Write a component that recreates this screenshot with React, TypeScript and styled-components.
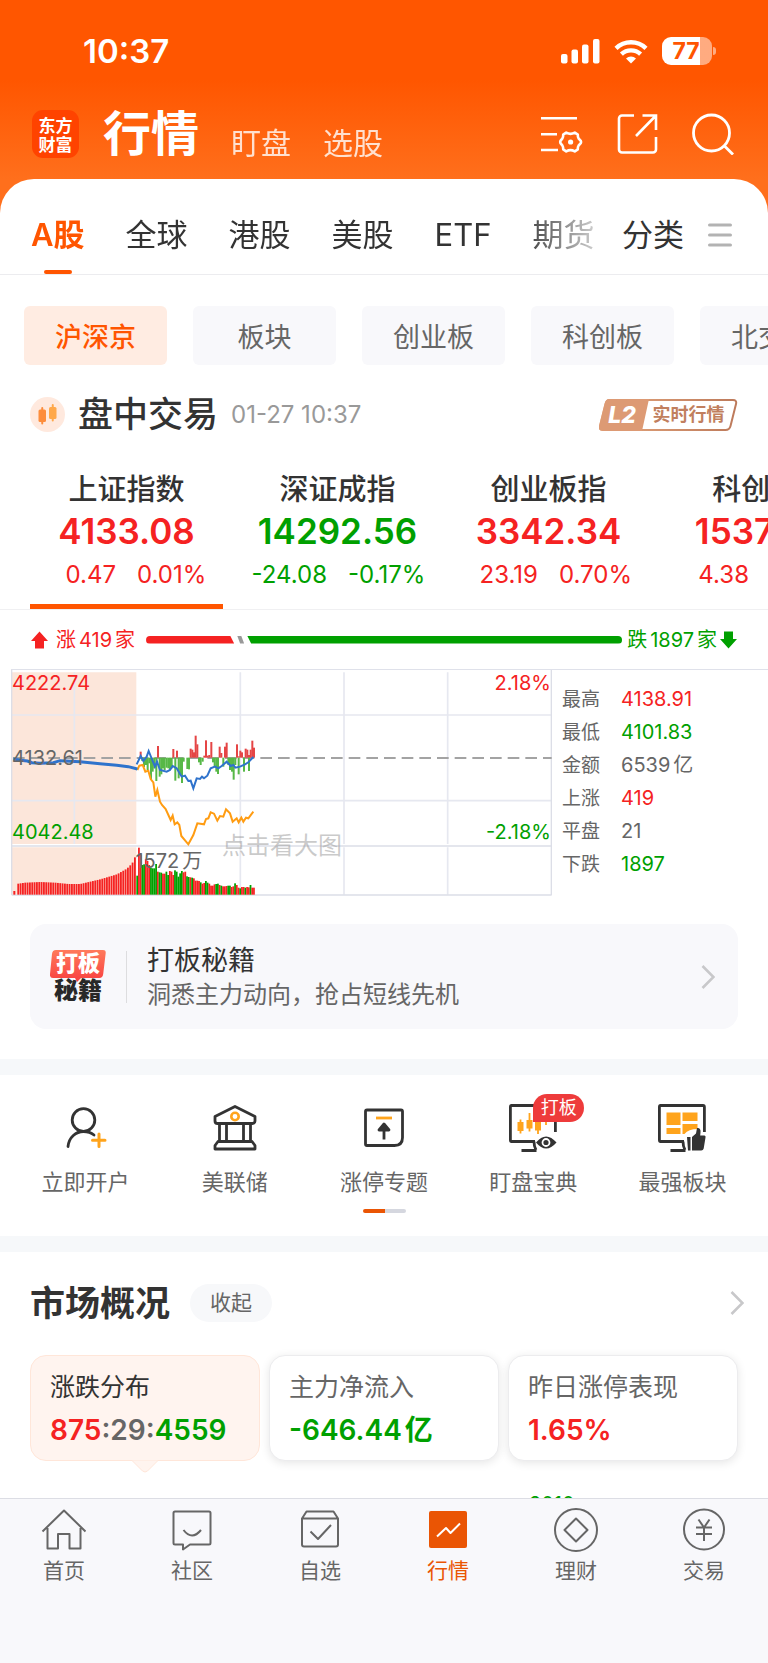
import React from "react";
import styled, { createGlobalStyle } from "styled-components";

const RED = "#f52222";
const GREEN = "#00a000";
const ORANGE = "#ff5500";
const INK = "#333333";
const GREY = "#666666";
const toneColor = { up: RED, down: GREEN, flat: GREY };
type Tone = keyof typeof toneColor;

const GlobalStyle = createGlobalStyle`
  *, *::before, *::after { box-sizing: border-box; }
  body {
    margin: 0;
    background: #ffffff;
    color: ${INK};
    font-family: Inter, "Noto Sans CJK SC", sans-serif;
  }
  button {
    margin: 0;
    padding: 0;
    border: 0;
    background: none;
    color: inherit;
    font: inherit;
    cursor: pointer;
  }
  a { color: inherit; text-decoration: none; }
  h1, h2, p, dl, dd, dt { margin: 0; font-weight: inherit; }
  svg { display: block; flex: none; }
`;

const Shell = styled.div`
  display: flex;
  flex-direction: column;
  height: 100vh;
  overflow: hidden;
`;

const Content = styled.main`
  flex: 1;
  min-height: 0;
  overflow: hidden;
  background: linear-gradient(#ff5600 0, #ff5600 80px, #ff6f1c 179px, #ff6f1c 260px, #ffffff 260px);
`;

/* Number set between Chinese characters, or before a Chinese unit. */
const Amount = styled.span<{ $between?: boolean }>`
  margin: 0 3px 0 ${(p) => (p.$between ? 3 : 0)}px;
`;

/* ---------- header ---------- */

const StatusBar = styled.div`
  display: flex;
  align-items: center;
  justify-content: space-between;
  height: 102px;
  padding: 0 56px 0 83px;
  color: #ffffff;
`;

const Clock = styled.time`
  font-size: 33px;
  line-height: 40px;
  font-weight: 600;
`;

const StatusIcons = styled.div`
  display: flex;
  align-items: center;
  gap: 14px;
`;

const Battery = styled.div`
  position: relative;
  width: 50px;
  height: 28px;
  border-radius: 9px;
  background: linear-gradient(to right, #ffffff 76%, rgba(255, 255, 255, 0.5) 76%);
  color: ${ORANGE};
  font-size: 23px;
  line-height: 28px;
  font-weight: 700;
  text-align: center;
  padding-right: 2px;

  &::after {
    content: "";
    position: absolute;
    right: -4px;
    top: 10px;
    width: 3px;
    height: 8px;
    border-radius: 0 4px 4px 0;
    background: rgba(255, 255, 255, 0.5);
  }
`;

const TitleBar = styled.header`
  display: flex;
  align-items: center;
  height: 77px;
  padding: 0 34px 13px 32px;
  color: #ffffff;
`;

const Logo = styled.span`
  width: 47px;
  height: 48px;
  padding: 5px 0;
  border-radius: 11px;
  background: #ff4300;
  font-family: "Noto Sans CJK SC", sans-serif;
  font-size: 17px;
  line-height: 19px;
  font-weight: 700;
  text-align: center;
`;

const TitleLinks = styled.nav`
  flex: 1;
  display: flex;
  align-items: flex-end;
  gap: 32px;
  margin-left: 24px;
`;

const MainTitle = styled.h1`
  font-size: 48px;
  line-height: 48px;
  font-weight: 700;
`;

const SubTitle = styled.a`
  font-size: 30px;
  line-height: 30px;
  opacity: 0.8;
`;

const Actions = styled.div`
  display: flex;
  align-items: center;
  gap: 34px;
`;

/* ---------- sheet and tabs ---------- */

const Sheet = styled.div`
  background: #ffffff;
  border-radius: 34px 34px 0 0;
`;

const TabBar = styled.div`
  display: flex;
  align-items: stretch;
  height: 96px;
  padding: 16px 36px 0 31px;
  border-bottom: 1px solid #ececef;
`;

const TabList = styled.div`
  flex: 1;
  min-width: 0;
  display: flex;
  gap: 41px;
  overflow: hidden;
  mask-image: linear-gradient(to right, #000 calc(100% - 74px), rgba(0, 0, 0, 0.25));
`;

const Tab = styled.button<{ $active?: boolean }>`
  position: relative;
  flex: none;
  font-size: 31px;
  line-height: 80px;
  font-weight: ${(p) => (p.$active ? 600 : 400)};
  color: ${(p) => (p.$active ? ORANGE : INK)};

  &::after {
    content: "";
    display: ${(p) => (p.$active ? "block" : "none")};
    position: absolute;
    left: calc(50% - 14px);
    bottom: 0;
    width: 28px;
    height: 4px;
    border-radius: 2px;
    background: ${ORANGE};
  }
`;

const TabTools = styled.div`
  display: flex;
  align-items: center;
  gap: 24px;
  margin-left: 28px;
`;

const ChipRow = styled.div`
  display: flex;
  gap: 26px;
  padding: 31px 0 0 24px;
  overflow: hidden;
`;

const Chip = styled.button<{ $active?: boolean }>`
  flex: none;
  width: 143px;
  height: 59px;
  border-radius: 6px;
  background: ${(p) => (p.$active ? "#ffece2" : "#f8f8fb")};
  color: ${(p) => (p.$active ? ORANGE : GREY)};
  font-size: 27px;
  font-weight: ${(p) => (p.$active ? 500 : 400)};
`;

const SessionRow = styled.div`
  display: flex;
  align-items: center;
  height: 35px;
  margin: 32px 30px 0;
`;

const SessionTitle = styled.h2`
  margin-left: 13px;
  font-size: 35px;
  line-height: 35px;
  font-weight: 500;
`;

const SessionTime = styled.time`
  flex: 1;
  margin-left: 13px;
  font-size: 24px;
  line-height: 35px;
  color: #999999;
`;

const LevelBadge = styled.button`
  position: relative;
  display: flex;
  align-items: center;
  width: 139px;
  height: 32px;
  padding-right: 6px;
  color: #c17f5e;
  font-size: 18px;
  line-height: 32px;
  font-weight: 700;

  svg { position: absolute; inset: 0; }
  span { position: relative; flex: 1; text-align: center; }
`;

const LevelMark = styled.em`
  position: relative;
  width: 46px;
  color: #ffffff;
  font-size: 23px;
  font-weight: 800;
`;

/* ---------- indices ---------- */

const IndexRow = styled.div`
  display: flex;
  gap: 18px;
  padding: 41px 0 0 30px;
  overflow: hidden;
  border-bottom: 1px solid #f0f0f2;
`;

const IndexCard = styled.button<{ $active?: boolean }>`
  flex: none;
  width: 193px;
  padding-bottom: 9px;
  border-bottom: 5px solid ${(p) => (p.$active ? ORANGE : "transparent")};
`;

const IndexName = styled.div`
  font-size: 29px;
  line-height: 34px;
  font-weight: 500;
`;

const IndexValue = styled.div<{ $tone: Tone }>`
  font-size: 35px;
  line-height: 48px;
  font-weight: 600;
  color: ${(p) => toneColor[p.$tone]};
`;

const IndexChange = styled.div<{ $tone: Tone }>`
  display: grid;
  grid-template-columns: 1fr 1fr;
  gap: 21px;
  font-size: 24px;
  line-height: 40px;
  color: ${(p) => toneColor[p.$tone]};

  span:first-child { justify-self: end; }
  span:last-child { justify-self: start; }
`;

const BreadthRow = styled.div`
  display: flex;
  align-items: center;
  height: 59px;
  padding: 0 31px;
`;

const BreadthLabel = styled.span<{ $tone: Tone }>`
  display: flex;
  align-items: center;
  gap: ${(p) => (p.$tone === "up" ? 8 : 3)}px;
  font-size: 20px;
  line-height: 30px;
  color: ${(p) => toneColor[p.$tone]};
`;

const BreadthBar = styled.div`
  flex: 1;
  display: flex;
  gap: 3px;
  height: 8px;
  margin: 0 5px 0 11px;
`;

const RiseBar = styled.span`
  flex: 88;
  border-radius: 4px 0 0 4px;
  background: ${RED};
  clip-path: polygon(0 0, calc(100% - 4px) 0, 100% 100%, 0 100%);
`;

const FlatBar = styled.span`
  width: 7px;
  background: #999999;
  clip-path: polygon(0 0, 4px 0, 100% 100%, 3px 100%);
`;

const FallBar = styled.span`
  flex: 375;
  border-radius: 0 4px 4px 0;
  background: ${GREEN};
  clip-path: polygon(0 0, 100% 0, 100% 100%, 4px 100%);
`;

/* ---------- chart ---------- */

const ChartPanel = styled.section`
  display: flex;
  margin-left: 11px;
  border-top: 1px solid #dfe1ea;
`;

const ChartBox = styled.button`
  position: relative;
  flex: 1;
  height: 226px;

  svg { width: 100%; height: 100%; }
`;

const ChartLabel = styled.span<{ $color: string; $top: number; $right?: boolean }>`
  position: absolute;
  top: ${(p) => p.$top}px;
  ${(p) => (p.$right ? "right: 1px;" : "left: 1px;")}
  font-size: 20px;
  line-height: 24px;
  color: ${(p) => p.$color};
`;

const VolumeLabel = styled.span`
  position: absolute;
  left: 23%;
  top: 178px;
  font-size: 20px;
  line-height: 26px;
  color: ${GREY};
`;

const ChartHint = styled.span`
  position: absolute;
  left: 39%;
  top: 161px;
  font-size: 24px;
  line-height: 30px;
  color: rgba(150, 150, 150, 0.5);
`;

const Stats = styled.dl`
  display: grid;
  grid-template-columns: 59px 1fr;
  grid-auto-rows: 33px;
  align-content: start;
  width: 216px;
  padding: 13px 0 0 10px;
  font-size: 19px;
  line-height: 33px;
  color: ${GREY};
`;

const StatValue = styled.dd<{ $tone: Tone }>`
  font-size: 20px;
  color: ${(p) => toneColor[p.$tone]};
`;

/* ---------- promo ---------- */

const Promo = styled.a`
  display: flex;
  align-items: center;
  height: 105px;
  margin: 28px 30px 30px;
  padding: 0 23px 0 20px;
  border-radius: 16px;
  background: #f8f8fb;
`;

const PromoLogo = styled.span`
  position: relative;
  display: flex;
  flex-direction: column;
  width: 56px;
  height: 54px;
  font-size: 24px;
  line-height: 27px;
  font-weight: 900;
  text-align: center;
  color: #282828;

  svg { position: absolute; left: 0; top: 0; }
  b { position: relative; font-size: 22px; font-weight: 900; color: #ffffff; }
`;

const PromoText = styled.span`
  flex: 1;
  display: flex;
  flex-direction: column;
  margin-left: 20px;
  padding-left: 21px;
  background: linear-gradient(#dddddf, #dddddf) left center / 1px 52px no-repeat;
`;

const PromoTitle = styled.strong`
  font-size: 27px;
  line-height: 36px;
  font-weight: 400;
`;

const PromoNote = styled.span`
  font-size: 24px;
  line-height: 32px;
  color: ${GREY};
`;

const Band = styled.div`
  height: 16px;
  background: #f6f8fa;
`;

/* ---------- quick entries ---------- */

const QuickSection = styled.section`
  padding: 29px 11px 23px;
`;

const QuickGrid = styled.div`
  display: grid;
  grid-template-columns: repeat(5, 1fr);
`;

const QuickItem = styled.a`
  display: flex;
  flex-direction: column;
  align-items: center;
  gap: 15px;
  font-size: 22px;
  line-height: 30px;
  color: ${GREY};
`;

const QuickIcon = styled.span`
  position: relative;
`;

const QuickTag = styled.span`
  position: absolute;
  left: 24px;
  top: -10px;
  width: 51px;
  height: 28px;
  border-radius: 14px 14px 14px 0;
  background: #ee3b3b;
  color: #ffffff;
  font-size: 18px;
  line-height: 28px;
  text-align: center;
`;

const Pager = styled.div`
  width: 43px;
  height: 4px;
  margin: 12px auto 0;
  border-radius: 2px;
  background: linear-gradient(to right, #ea5504 50%, #d5d7df 50%);
`;

/* ---------- market overview ---------- */

const OverviewHead = styled.div`
  display: flex;
  align-items: center;
  height: 38px;
  margin: 32px 24px 33px 30px;
`;

const OverviewTitle = styled.h2`
  font-size: 35px;
  line-height: 38px;
  font-weight: 600;
`;

const FoldButton = styled.button`
  width: 82px;
  height: 38px;
  margin: 0 auto 0 20px;
  border-radius: 19px;
  background: #f7f8fa;
  color: ${GREY};
  font-size: 21px;
  line-height: 38px;
`;

const OverviewGrid = styled.div`
  display: grid;
  grid-template-columns: repeat(3, 1fr);
  gap: 9px;
  margin: 0 30px;
`;

const OverviewCard = styled.button<{ $active?: boolean }>`
  position: relative;
  height: 106px;
  padding: 3px 19px 0;
  border: 1px solid ${(p) => (p.$active ? "#ffe6d9" : "#ececee")};
  border-radius: 16px;
  background: ${(p) => (p.$active ? "#fff4ef" : "#ffffff")};
  box-shadow: ${(p) => (p.$active ? "none" : "0 2px 10px rgba(0, 0, 0, 0.1)")};
  color: ${(p) => (p.$active ? INK : GREY)};
  text-align: left;

  svg {
    position: absolute;
    left: calc(50% - 13px);
    top: 103px;
  }
`;

const CardTitle = styled.div`
  font-size: 25px;
  line-height: 40px;
`;

const CardValue = styled.div<{ $tone: Tone }>`
  font-size: 28px;
  line-height: 46px;
  font-weight: 600;
  color: ${(p) => toneColor[p.$tone]};
`;

const Toned = styled.span<{ $tone: Tone }>`
  color: ${(p) => toneColor[p.$tone]};
`;

const BarCount = styled.span`
  grid-column: 3;
  margin-top: 19px;
  padding-left: 21px;
  font-size: 20px;
  line-height: 30px;
  color: ${GREEN};
`;

/* ---------- bottom navigation ---------- */

const BottomNav = styled.nav`
  flex: none;
  display: grid;
  grid-template-columns: repeat(6, 1fr);
  align-items: start;
  height: 165px;
  padding-top: 8px;
  border-top: 1px solid #dcdde4;
  background: #f8f8fb;
`;

const NavItem = styled.a<{ $active?: boolean }>`
  display: flex;
  flex-direction: column;
  align-items: center;
  gap: 3px;
  font-size: 21px;
  line-height: 30px;
  color: ${(p) => (p.$active ? "#ea5504" : GREY)};
`;

/* ---------- drawings ---------- */

const SignalIcon = () => (
  <svg width="39" height="25" viewBox="0 0 39 25" fill="#fff" aria-hidden="true">
    <rect x="0" y="15" width="6.500" height="9.500" rx="2" />
    <rect x="10.500" y="10.500" width="6.500" height="14" rx="2" />
    <rect x="21" y="5.500" width="6.500" height="19" rx="2" />
    <rect x="32" y="0" width="6.500" height="24.500" rx="2" />
  </svg>
);

const WifiIcon = () => (
  <svg width="34" height="25" viewBox="0 0 34 25" fill="none" stroke="#fff" strokeWidth="4.400" aria-hidden="true">
    <path d="M2 9.300a21.500 21.500 0 0 1 30 0" />
    <path d="M7.400 15.200a14 14 0 0 1 19.200 0" />
    <path d="M17 24.500l-5-5a7.400 7.400 0 0 1 10 0z" fill="#fff" stroke="none" />
  </svg>
);

const FilterIcon = () => (
  <svg width="42" height="42" viewBox="0 0 42 42" fill="none" stroke="#fff" strokeWidth="2.600" aria-hidden="true">
    <path d="M0 5.300h36M0 21.200h16M0 37h17" />
    <path
      d="M25.200 19.600c1.800 1 2.600 1.300 4.300 1.300s2.500-.3 4.300-1.300l3 2c-.2 2.400.2 2.900 1 4.200.7 1.100 2.300 1.500 2.300 3.200s-1.600 2.100-2.300 3.200c-.8 1.300-1.200 1.800-1 4.200l-3 2c-1.800-1-2.600-1.300-4.300-1.300s-2.500.3-4.300 1.300l-3-2c.2-2.400-.2-2.900-1-4.200-.7-1.100-2-1.500-2-3.200s1.300-2.100 2-3.200c.8-1.300 1.200-1.800 1-4.200z"
      strokeLinejoin="round"
    />
    <circle cx="29.600" cy="29" r="2.600" fill="#fff" stroke="none" />
  </svg>
);

const ShareIcon = () => (
  <svg width="41" height="42" viewBox="0 0 41 42" fill="none" stroke="#fff" strokeWidth="2.600" aria-hidden="true">
    <path d="M17 2.500H5a3 3 0 0 0-3 3v31a3 3 0 0 0 3 3h31a3 3 0 0 0 3-3V24" />
    <path d="M25.500 2.500H39V17M38.500 3L19 23" />
  </svg>
);

const SearchIcon = () => (
  <svg width="42" height="42" viewBox="0 0 42 42" fill="none" stroke="#fff" strokeWidth="2.800" aria-hidden="true">
    <circle cx="19.500" cy="20" r="18" />
    <path d="M32 32.500l9 9" />
  </svg>
);

const MenuIcon = () => (
  <svg width="24" height="24" viewBox="0 0 24 24" stroke="#b3b3b3" strokeWidth="3" strokeLinecap="round" aria-hidden="true">
    <path d="M1.500 2h21M1.500 12h21M1.500 22h21" />
  </svg>
);

const CandleIcon = () => (
  <svg width="35" height="35" viewBox="0 0 35 35" aria-hidden="true">
    <circle cx="17.500" cy="17.500" r="17.500" fill="#ffe9de" />
    <g fill="#fd8d3c">
      <rect x="8.500" y="12.500" width="7.500" height="12.500" rx="1.500" />
      <rect x="11.250" y="10" width="2" height="17.500" rx="1" />
    </g>
    <g fill="#ffa84a">
      <rect x="19" y="10" width="7.500" height="12" rx="1.500" />
      <rect x="21.750" y="7" width="2" height="17.500" rx="1" />
    </g>
  </svg>
);

const BadgeFrame = () => (
  <svg width="139" height="32" viewBox="0 0 139 32" fill="none" aria-hidden="true">
    <defs>
      <linearGradient id="badgeTone" x1="0" x2="1">
        <stop offset="0" stopColor="#e5a77d" />
        <stop offset="1" stopColor="#bd7a5b" />
      </linearGradient>
    </defs>
    <path d="M10.500 1H134q4 0 3 4l-5.500 22q-1 4-5 4H4q-4 0-3-4L6.500 5q1-4 4-4z" stroke="url(#badgeTone)" strokeWidth="2" />
    <path d="M10 0h40l-7 32H4q-5 0-4-5L5.500 5q1-5 4.500-5z" fill="#dd9a74" />
  </svg>
);

const ArrowUp = () => (
  <svg width="17" height="18" viewBox="0 0 17 18" fill={RED} aria-hidden="true">
    <path d="M8.500 0.500L17 10h-4v7.500H4V10H0z" />
  </svg>
);

const ArrowDown = () => (
  <svg width="17" height="18" viewBox="0 0 17 18" fill={GREEN} aria-hidden="true">
    <path d="M8.500 17.500L0 8h4V0.500h9V8h4z" />
  </svg>
);

const Chevron = () => (
  <svg width="14" height="24" viewBox="0 0 14 24" fill="none" stroke="#c8c8ca" strokeWidth="2.600" aria-hidden="true">
    <path d="M1.500 1l11 11-11 11" />
  </svg>
);

const PromoBubble = () => (
  <svg width="56" height="32" viewBox="0 0 56 32" aria-hidden="true">
    <defs>
      <linearGradient id="bubbleTone" x1="0" x2="0" y1="0" y2="1">
        <stop offset="0" stopColor="#ff7a5c" />
        <stop offset="1" stopColor="#f8403f" />
      </linearGradient>
    </defs>
    <path d="M6 0h47q3 0 2.700 3l-2.500 21q-.4 4-4 4H31l-4 4-2-4H3q-3.500 0-3-4L2 4q.4-4 4-4z" fill="url(#bubbleTone)" />
  </svg>
);

const quickStroke = { fill: "none", stroke: INK, strokeWidth: 2.8, strokeLinejoin: "round" as const };

const AccountIcon = () => (
  <svg width="48" height="48" viewBox="0 0 48 48" {...quickStroke} strokeLinecap="round" aria-hidden="true">
    <circle cx="21.500" cy="16" r="11.300" />
    <path d="M6 42.500c1-9.500 8-15 15.500-15 4 0 7.500 1 10.500 3.500" />
    <path d="M37 30v12.500M30.500 36.200h12.500" stroke="#ffa41c" strokeWidth="3" />
  </svg>
);

const BankIcon = () => (
  <svg width="48" height="48" viewBox="0 0 48 48" {...quickStroke} aria-hidden="true">
    <path d="M24 2.500L4 12.500v4.500q0 2.500 2.500 2.500h35q2.500 0 2.500-2.500v-4.500z" />
    <path d="M8.500 19.500v18M15.500 19.500v18M32.500 19.500v18M39.500 19.500v18" />
    <path d="M7 37.500h34l3 4V45H4v-3.500z" />
    <circle cx="24" cy="12.500" r="3.700" stroke="#ffa41c" strokeWidth="2.600" />
  </svg>
);

const LimitIcon = () => (
  <svg width="48" height="48" viewBox="0 0 48 48" {...quickStroke} aria-hidden="true">
    <path d="M7 6h34q1.500 0 1.500 1.500v26q0 8-8 8H7q-1.500 0-1.500-1.500V7.500q0-1.500 1.500-1.500z" />
    <path d="M16 14h16" stroke="#ffa41c" />
    <path d="M24 20v15.500M19 26l5-6 5 6z" fill={INK} />
  </svg>
);

const ScreenFrame = () => (
  <path d="M26 37.500H2.500Q1.400 37.500 1.400 36V3Q1.400 1.500 2.500 1.500h42.500Q46.400 1.500 46.400 3V28M25 37.500q0 5 2 8.500M12.500 46.500H27.500" strokeWidth="2.800" />
);

const WatchIcon = () => (
  <svg width="48" height="48" viewBox="0 0 48 48" {...quickStroke} aria-hidden="true">
    <ScreenFrame />
    <path d="M11.500 15.500v14M20.500 9v18.500M29 13v17M37 8v13" stroke="#ffa41c" strokeWidth="1.800" />
    <path d="M8.500 18h6v9h-6zM17.500 16h6v8.500h-6zM26 18h6v8.500h-6z" fill="#ffa41c" stroke="none" />
    <path d="M27 38.500q10-12 20.500 0-10.500 12-20.500 0z" fill={INK} stroke="none" />
    <circle cx="37" cy="38.500" r="3.500" stroke="#fff" strokeWidth="1.800" />
  </svg>
);

const SectorIcon = () => (
  <svg width="48" height="48" viewBox="0 0 48 48" {...quickStroke} aria-hidden="true">
    <ScreenFrame />
    <path d="M8.500 8.500h14v12.500h-14zM24.500 8.500H39.500v8.500H24.500zM8.500 24h14v6h-14zM24.500 20H39.500v5q-9 0-13 5h-2z" fill="#ffa41c" stroke="none" />
    <path
      d="M29 33h3.500v13.500H30zM34 33l4-3.500 1-5.500q4-.5 3.500 4.500l-.3 3H46.500q1.500.5 1 2l-1.800 11q-.5 2-2.500 2H34z"
      fill={INK}
      stroke="none"
    />
  </svg>
);

const navStroke = { width: 46, height: 46, viewBox: "0 0 46 46", fill: "none", stroke: "currentColor", strokeWidth: 2, strokeLinejoin: "round" as const };

const HomeIcon = () => (
  <svg {...navStroke} aria-hidden="true">
    <path d="M1.500 24.500L23 3.500l21.500 21M6.500 21v20.500H17V27h11.500v14.500h11V21" />
  </svg>
);
const CommunityIcon = () => (
  <svg {...navStroke} aria-hidden="true">
    <path d="M6 4.500h34q1.500 0 1.500 1.500v30q0 1.500-1.500 1.500H21l-7 5v-5H6q-1.500 0-1.500-1.500V6q0-1.500 1.500-1.500z" />
    <path d="M14.500 23q8.500 11 17.500 0" />
  </svg>
);
const WatchlistIcon = () => (
  <svg {...navStroke} aria-hidden="true">
    <path d="M5 11.500L9.500 4.500h27L41 11.500v26q0 2-2 2H7q-2 0-2-2zM5 11.500h36" />
    <path d="M13.500 24.500l7.500 7.500 13-14" />
  </svg>
);
const MarketIcon = () => (
  <svg {...navStroke} aria-hidden="true">
    <rect x="4" y="4" width="38" height="37" rx="2" fill="currentColor" stroke="none" />
    <path d="M12 29.500l9-8.500 4.500 5 9.500-9.500" stroke="#fff" strokeWidth="2" />
  </svg>
);
const WealthIcon = () => (
  <svg {...navStroke} aria-hidden="true">
    <circle cx="23" cy="23" r="21" />
    <path d="M23 11.500L34.500 23 23 34.500 11.500 23z" />
  </svg>
);
const TradeIcon = () => (
  <svg {...navStroke} aria-hidden="true">
    <circle cx="23" cy="22.500" r="20" />
    <path d="M17.500 12.500l5.500 8 5.500-8M23 20.500V34M15 20.500h16M15 27h16" />
  </svg>
);

/* Chart drawing units: three per displayed pixel. */
const auctionCurve: [number, number][] = [
  [54, 33], [75, 36], [120, 38], [165, 36], [205, 32], [240, 32], [300, 46], [350, 61], [380, 78], [396, 94], [404, 112],
];
const auctionHeight = (x: number) => {
  const i = Math.max(1, auctionCurve.findIndex(([cx]) => cx >= x));
  const [x0, y0] = auctionCurve[i - 1];
  const [x1, y1] = auctionCurve[i];
  return y0 + ((y1 - y0) * (x - x0)) / (x1 - x0);
};
const auctionBars = Array.from({ length: 51 }, (_, i) => 54 + i * 7);

const volumeTops = [
  662, 578, 598, 630, 628, 612, 618, 630, 638, 640, 640, 627, 650, 652, 653, 656, 656, 650, 660, 648, 650, 660, 646,
  650, 665, 655, 648, 652, 650, 664, 666, 667, 668, 670, 677, 677, 678, 682, 686, 684, 678, 683, 686, 692, 692, 688,
  687, 686, 690, 692, 694, 694, 693, 692, 692, 696, 694, 685, 690, 698, 700, 696, 696, 698, 696, 697, 690, 698, 698,
];
const volumeSides = "GRRGGRRRGGGGRGGRRGGRRRGGGGGRRGGRGRRRRGRRGGRRRRGGRGRRRGGRRGRRGRRGRRGRR";

const strengthUp = [
  [422, 290], [474, 273], [520, 282], [531, 287], [572, 281], [577, 284], [582, 292], [587, 242], [592, 268],
  [613, 302], [618, 256], [623, 302], [628, 300], [634, 261], [659, 275], [664, 294], [675, 275], [680, 263],
  [711, 268], [716, 304], [721, 287], [726, 292], [737, 281], [742, 284], [747, 300], [752, 284], [757, 257], [762, 278],
];
const strengthDown = [
  [427, 318], [432, 336], [438, 330], [443, 345], [448, 325], [453, 372], [458, 350], [463, 340], [469, 378],
  [479, 365], [484, 358], [489, 340], [494, 345], [500, 338], [505, 340], [510, 345], [515, 340], [526, 377],
  [536, 370], [541, 360], [546, 384], [551, 320], [562, 342], [567, 343], [597, 322], [602, 330], [608, 320],
  [639, 322], [644, 335], [649, 350], [654, 357], [670, 335], [685, 330], [690, 345], [696, 350], [701, 374],
  [706, 330], [716, 358], [732, 350], [747, 348],
];

const IntradayChart = () => (
  <svg viewBox="33 45 1623 678" preserveAspectRatio="none" aria-hidden="true">
    <path d="M35 52H409V567H35zM35 577H409V719H35z" fill="#fce6da" />
    <g stroke="#e6e8f0" strokeWidth="5" fill="none">
      <path d="M35 180H1655M35 437H1655M223 52V567M721 52V567M1032 52V567M1343 52V567M721 577V719M1032 577V719M1343 577V719" />
    </g>
    <path d="M35 573H1655M35 720H1655M35 45V720M1654 45V720" stroke="#dcdee7" strokeWidth="4" />
    <path d="M39 309H1655" stroke="#a3a3a3" strokeWidth="6" strokeDasharray="35 18" />
    {strengthUp.map(([x, y]) => (
      <rect key={x} x={x - 3} y={y} width="6" height={308 - y} fill="#e54545" />
    ))}
    {strengthDown.map(([x, y]) => (
      <rect key={x} x={x - 3} y="308" width="6" height={y - 308} fill="#57b847" />
    ))}
    <rect x="40" y="708" width="6" height="11" fill={RED} />
    {auctionBars.map((x) => (
      <rect key={x} x={x - 2} y={719 - auctionHeight(x)} width="5.500" height={auctionHeight(x)} fill={RED} />
    ))}
    {volumeTops.map((top, i) => (
      <rect key={i} x={409 + i * 5.15} y={top} width="5.300" height={719 - top} fill={volumeSides[i] === "G" ? GREEN : RED} />
    ))}
    <polyline
      points="412,345 418,332 428,330 436,350 445,347 452,372 460,382 466,425 472,405 480,440 486,450 497,462 512,495 518,482 524,508 532,502 538,510 544,543 565,568 580,540 592,505 612,508 618,492 625,490 632,472 642,476 652,497 660,483 670,485 678,463 690,475 698,500 710,490 716,502 724,488 730,500 738,488 745,490 760,470"
      fill="none"
      stroke="#ff9c12"
      strokeWidth="6"
    />
    <polyline
      points="40,312 62,316 82,318 96,323 120,325 160,323 180,317 240,320 300,326 350,331 385,335 412,342"
      fill="none"
      stroke="#2f73cc"
      strokeWidth="9"
    />
    <polyline
      points="410,328 422,303 430,318 440,305 446,288 452,303 465,335 471,320 480,345 500,350 510,345 518,333 530,340 545,365 555,362 565,378 572,377 580,400 590,370 600,372 606,365 612,370 622,362 632,340 645,335 655,340 665,333 680,320 692,333 700,330 706,338 720,335 735,328 745,322 760,306"
      fill="none"
      stroke="#2f73cc"
      strokeWidth="6"
    />
  </svg>
);

/* ---------- data ---------- */

const markets = ["A股", "全球", "港股", "美股", "ETF", "期货"];
const boards = ["沪深京", "板块", "创业板", "科创板", "北交所"];
const indices: { name: string; value: string; change: string; percent: string; tone: Tone }[] = [
  { name: "上证指数", value: "4133.08", change: "0.47", percent: "0.01%", tone: "up" },
  { name: "深证成指", value: "14292.56", change: "-24.08", percent: "-0.17%", tone: "down" },
  { name: "创业板指", value: "3342.34", change: "23.19", percent: "0.70%", tone: "up" },
  { name: "科创50", value: "1537.62", change: "4.38", percent: "0.29%", tone: "up" },
];
const stats: { label: string; value: string; unit?: string; tone: Tone }[] = [
  { label: "最高", value: "4138.91", tone: "up" },
  { label: "最低", value: "4101.83", tone: "down" },
  { label: "金额", value: "6539", unit: "亿", tone: "flat" },
  { label: "上涨", value: "419", tone: "up" },
  { label: "平盘", value: "21", tone: "flat" },
  { label: "下跌", value: "1897", tone: "down" },
];
const quickEntries = [
  { label: "立即开户", icon: <AccountIcon /> },
  { label: "美联储", icon: <BankIcon /> },
  { label: "涨停专题", icon: <LimitIcon /> },
  { label: "盯盘宝典", icon: <WatchIcon />, tag: "打板" },
  { label: "最强板块", icon: <SectorIcon /> },
];
const navItems = [
  { label: "首页", icon: <HomeIcon /> },
  { label: "社区", icon: <CommunityIcon /> },
  { label: "自选", icon: <WatchlistIcon /> },
  { label: "行情", icon: <MarketIcon />, active: true },
  { label: "理财", icon: <WealthIcon /> },
  { label: "交易", icon: <TradeIcon /> },
];

export default function App() {
  return (
    <Shell>
      <GlobalStyle />
      <Content>
        <StatusBar>
          <Clock>10:37</Clock>
          <StatusIcons>
            <SignalIcon />
            <WifiIcon />
            <Battery>77</Battery>
          </StatusIcons>
        </StatusBar>
        <TitleBar>
          <Logo>东方财富</Logo>
          <TitleLinks>
            <MainTitle>行情</MainTitle>
            <SubTitle href="#watch">盯盘</SubTitle>
            <SubTitle href="#pick">选股</SubTitle>
          </TitleLinks>
          <Actions>
            <button aria-label="设置"><FilterIcon /></button>
            <button aria-label="分享"><ShareIcon /></button>
            <button aria-label="搜索"><SearchIcon /></button>
          </Actions>
        </TitleBar>

        <Sheet>
          <TabBar>
            <TabList>
              {markets.map((name, i) => (
                <Tab key={name} $active={i === 0}>{name}</Tab>
              ))}
            </TabList>
            <TabTools>
              <Tab>分类</Tab>
              <button aria-label="菜单"><MenuIcon /></button>
            </TabTools>
          </TabBar>

          <ChipRow>
            {boards.map((name, i) => (
              <Chip key={name} $active={i === 0}>{name}</Chip>
            ))}
          </ChipRow>

          <SessionRow>
            <CandleIcon />
            <SessionTitle>盘中交易</SessionTitle>
            <SessionTime>01-27 10:37</SessionTime>
            <LevelBadge>
              <BadgeFrame />
              <LevelMark>L2</LevelMark>
              <span>实时行情</span>
            </LevelBadge>
          </SessionRow>

          <IndexRow>
            {indices.map((item, i) => (
              <IndexCard key={item.name} $active={i === 0}>
                <IndexName>{item.name}</IndexName>
                <IndexValue $tone={item.tone}>{item.value}</IndexValue>
                <IndexChange $tone={item.tone}>
                  <span>{item.change}</span>
                  <span>{item.percent}</span>
                </IndexChange>
              </IndexCard>
            ))}
          </IndexRow>

          <BreadthRow>
            <BreadthLabel $tone="up">
              <ArrowUp />
              <span>涨<Amount $between>419</Amount>家</span>
            </BreadthLabel>
            <BreadthBar>
              <RiseBar />
              <FlatBar />
              <FallBar />
            </BreadthBar>
            <BreadthLabel $tone="down">
              <span>跌<Amount $between>1897</Amount>家</span>
              <ArrowDown />
            </BreadthLabel>
          </BreadthRow>

          <ChartPanel>
            <ChartBox>
              <IntradayChart />
              <ChartLabel $color={RED} $top={1}>4222.74</ChartLabel>
              <ChartLabel $color={GREY} $top={76}>4132.61</ChartLabel>
              <ChartLabel $color={GREEN} $top={150}>4042.48</ChartLabel>
              <ChartLabel $color={RED} $top={1} $right>2.18%</ChartLabel>
              <ChartLabel $color={GREEN} $top={150} $right>-2.18%</ChartLabel>
              <VolumeLabel><Amount>1572</Amount>万</VolumeLabel>
              <ChartHint>点击看大图</ChartHint>
            </ChartBox>
            <Stats>
              {stats.map((item) => (
                <React.Fragment key={item.label}>
                  <dt>{item.label}</dt>
                  <StatValue $tone={item.tone}>
                    <Amount>{item.value}</Amount>
                    {item.unit}
                  </StatValue>
                </React.Fragment>
              ))}
            </Stats>
          </ChartPanel>

          <Promo href="#guide">
            <PromoLogo>
              <PromoBubble />
              <b>打板</b>
              秘籍
            </PromoLogo>
            <PromoText>
              <PromoTitle>打板秘籍</PromoTitle>
              <PromoNote>洞悉主力动向，抢占短线先机</PromoNote>
            </PromoText>
            <Chevron />
          </Promo>

          <Band />

          <QuickSection>
            <QuickGrid>
              {quickEntries.map((entry) => (
                <QuickItem key={entry.label} href="#entry">
                  <QuickIcon>
                    {entry.icon}
                    {entry.tag && <QuickTag>{entry.tag}</QuickTag>}
                  </QuickIcon>
                  {entry.label}
                </QuickItem>
              ))}
            </QuickGrid>
            <Pager />
          </QuickSection>

          <Band />

          <section>
            <OverviewHead>
              <OverviewTitle>市场概况</OverviewTitle>
              <FoldButton>收起</FoldButton>
              <Chevron />
            </OverviewHead>
            <OverviewGrid>
              <OverviewCard $active>
                <CardTitle>涨跌分布</CardTitle>
                <CardValue $tone="flat">
                  <Toned $tone="up">875</Toned>:29:<Toned $tone="down">4559</Toned>
                </CardValue>
                <svg width="26" height="14" viewBox="0 0 26 14" aria-hidden="true">
                  <path d="M0 1.500L10.500 12q2.500 2 5 0L26 1.500" fill="#fff4ef" stroke="#ffe6d9" />
                </svg>
              </OverviewCard>
              <OverviewCard>
                <CardTitle>主力净流入</CardTitle>
                <CardValue $tone="down"><Amount>-646.44</Amount>亿</CardValue>
              </OverviewCard>
              <OverviewCard>
                <CardTitle>昨日涨停表现</CardTitle>
                <CardValue $tone="up">1.65%</CardValue>
              </OverviewCard>
              <BarCount>2010</BarCount>
            </OverviewGrid>
          </section>
        </Sheet>
      </Content>

      <BottomNav>
        {navItems.map((item) => (
          <NavItem key={item.label} href="#nav" $active={item.active}>
            {item.icon}
            {item.label}
          </NavItem>
        ))}
      </BottomNav>
    </Shell>
  );
}
